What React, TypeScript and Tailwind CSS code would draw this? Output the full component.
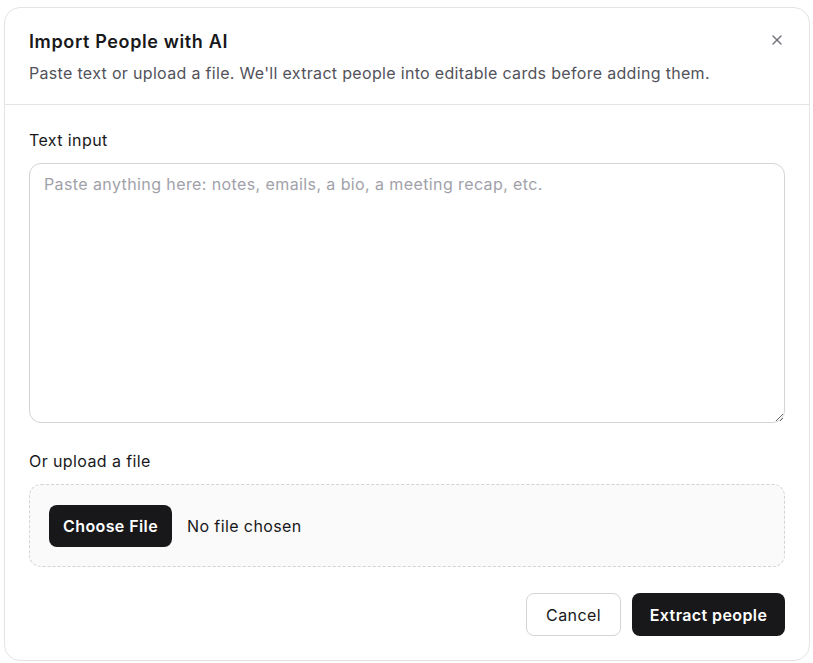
import { X } from "lucide-react"

function App(){
  return(
    <div className="min-h-screen bg-white p-1 pt-[7px] font-['Inter',sans-serif] text-[#18181b] tracking-wide">
      <div className="w-[806px] h-[654px] rounded-2xl border border-[#e4e4e7] bg-white flex flex-col">

        {/* header */}
        <div className="relative px-6 pt-5 pb-5 border-b border-[#e4e4e7]">
          <h2 className="text-lg leading-7 font-semibold tracking-[0.035em]">Import People with AI</h2>
          <p className="mt-1.5 text-base leading-[22px] text-[#52525b] tracking-[0.02em]">
            Paste text or upload a file. We'll extract people into editable cards before adding them.
          </p>
          <button className="absolute right-[24px] top-[24px] text-[#71717a]">
            <X size={16} strokeWidth={2} />
          </button>
        </div>

        {/* body */}
        <div className="px-6 pt-[23px] flex flex-col">
          <label className="text-base leading-6 font-normal">Text input</label>
          <textarea
            className="mt-[11px] h-[260px] w-full rounded-xl border border-[#d4d4d8] px-[14px] py-2 text-base leading-6 tracking-wide outline-none placeholder:text-[#a1a1aa]"
            placeholder="Paste anything here: notes, emails, a bio, a meeting recap, etc."
          />

          <label className="mt-[26px] text-base leading-6 font-normal">Or upload a file</label>
          <div className="mt-[11px] h-[83px] rounded-xl border border-dashed border-[#d4d4d8] bg-[#fafafa] px-[19px] flex items-center gap-[15px]">
            <button className="h-[42px] w-[123px] rounded-lg bg-[#18181b] text-base font-semibold tracking-wide text-white">
              Choose File
            </button>
            <span className="text-base">No file chosen</span>
          </div>
        </div>

        {/* footer */}
        <div className="mt-auto px-6 pb-6 flex justify-end gap-[11px]">
          <button className="h-[43px] w-[95px] rounded-lg border border-[#d4d4d8] bg-white text-base font-normal">
            Cancel
          </button>
          <button className="h-[43px] w-[153px] rounded-lg bg-[#18181b] text-base font-semibold tracking-wide text-white">
            Extract people
          </button>
        </div>

      </div>
    </div>
  )
}

export default App
